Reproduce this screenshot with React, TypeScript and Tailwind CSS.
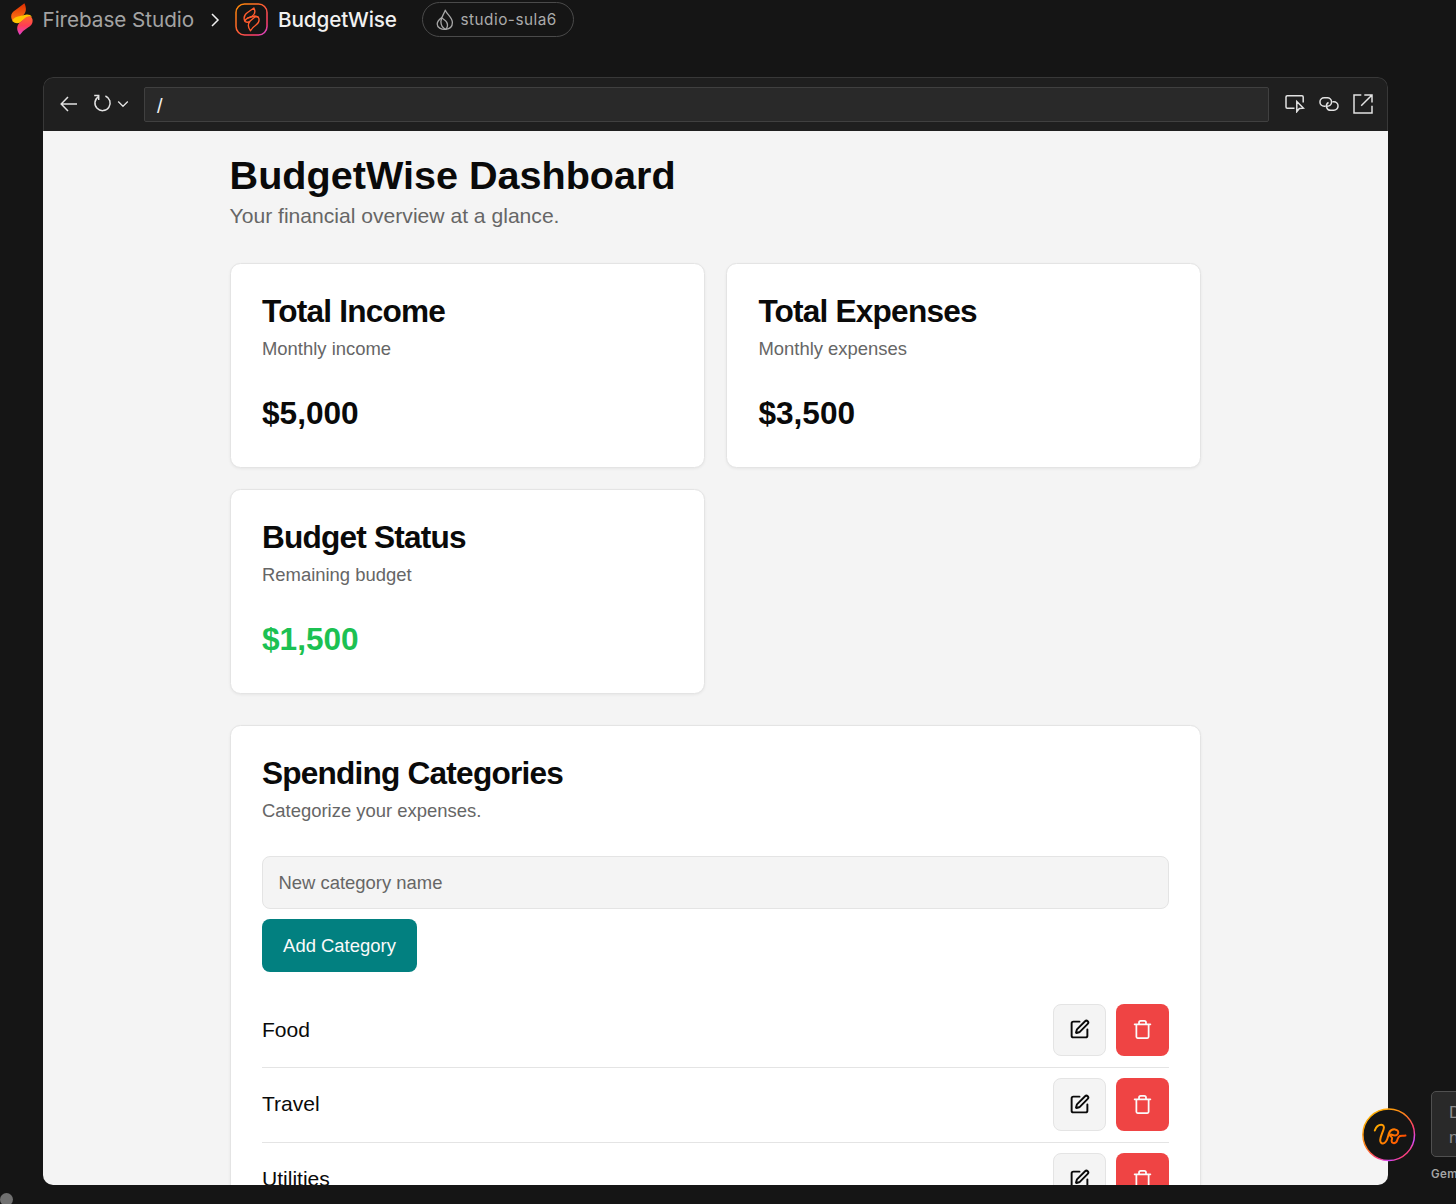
import React from "react";

const CARD =
  "rounded-[10.5px] border border-[#e4e4e4] bg-white px-[31.4px] pt-[32px] pb-[31.4px] shadow-[0_1px_3px_rgba(0,0,0,0.06)]";

function StudioMark() {
  return (
    <svg width="22" height="32" viewBox="0 0 22 32" className="shrink-0">
      <defs>
        <linearGradient id="top" x1="0" y1="0" x2="0" y2="1">
          <stop offset="0" stopColor="#dd2c00" />
          <stop offset="1" stopColor="#ff7a18" />
        </linearGradient>
        <linearGradient id="low" x1="0" y1="0" x2="0" y2="1">
          <stop offset="0" stopColor="#ff6a2b" />
          <stop offset="0.5" stopColor="#ff3d55" />
          <stop offset="1" stopColor="#e040d0" />
        </linearGradient>
      </defs>
      <path d="M1.6 18C-1.3 12.5.5 9.5 4.5 7L13.4 .2C15.8 5 15.3 9.8 12 12.5L5.5 16Q2.8 17 1.6 18Z" fill="url(#top)" />
      <path d="M1.4 18.2C2 15.8 3.3 14.8 6 13.8L15.5 11.6Q19.5 11.3 21 14C17 13.4 14.8 15 12 17.6Q6 22.8 1.4 18.2Z" fill="#ffc400" />
      <path d="M8.8 31.9C5.3 27.5 5.4 22.7 8.6 19.8L14.6 14.6Q20.3 11.6 21.4 15.9C22.3 20 20.5 22.5 17 24.6Q11.3 28 8.8 31.9Z" fill="url(#low)" />
    </svg>
  );
}

function AppBadge() {
  return (
    <svg width="33" height="33" viewBox="0 0 33 33" fill="none" className="shrink-0">
      <defs>
        <linearGradient id="ring" x1="0" y1="0" x2="33" y2="33" gradientUnits="userSpaceOnUse">
          <stop offset="0" stopColor="#ff9100" />
          <stop offset="0.5" stopColor="#ff5a36" />
          <stop offset="0.8" stopColor="#ff3d70" />
          <stop offset="1" stopColor="#b94cff" />
        </linearGradient>
      </defs>
      <rect x="1" y="1" width="31" height="31" rx="8.5" stroke="url(#ring)" strokeWidth="1.5" />
      <g stroke="#ff5c2e" strokeWidth="1.35" strokeLinejoin="round" strokeLinecap="round">
        <path d="M9.9 18.4C8 14.3 9.3 11.9 12.2 9.8L18.9 5C20.6 8.4 19.9 11.2 17.3 13L12.6 15.2Q10.3 16.4 9.9 18.4Q12.8 20.2 15.2 18L19.6 14.3Q22.8 12.3 23.8 15.3C24.7 18.4 23.5 20.3 21 22Q17.2 24.6 15.5 27.8C12.8 24.4 12.9 20.7 15.2 18" />
        <path d="M12.6 15.2L19.8 13L23.2 14.2" />
      </g>
    </svg>
  );
}

function Flame() {
  return (
    <svg width="18" height="22" viewBox="0 0 18 22" fill="none" stroke="#a8a8a8" strokeWidth="1.3" strokeLinejoin="round" className="shrink-0">
      <path d="M9.3 1.2C8.3 4.8 4.9 7.6 4.9 12.6C4.9 16.6 7 19.2 9.7 20.4C13.5 20 16.4 17.5 16.4 13.5C16.4 8.5 11 5.4 9.3 1.2Z" />
      <path d="M5.7 8.6C3.4 10.2 1.2 12 1.2 15C1.2 18.4 5 20.7 9.7 20.4C11.5 18.4 11.9 15.6 10.8 13.4C9.7 11.2 7.3 10.2 5.7 8.6Z" />
    </svg>
  );
}

const line = {
  fill: "none",
  stroke: "#e2e2e2",
  strokeWidth: 1.5,
  className: "shrink-0",
};

function StatCard({ title, note, amount, green }: { title: string; note: string; amount: string; green?: boolean }) {
  return (
    <div className={CARD + " h-[205px]"}>
      <h2 className="text-[31.6px] leading-[31px] font-bold tracking-[-0.025em]">{title}</h2>
      <p className="mt-[9.5px] text-[18.44px] leading-[26.3px] text-[#666]">{note}</p>
      <p className={"mt-[29.9px] text-[31.6px] leading-[42px] font-bold " + (green ? "text-[#1cc152]" : "")}>{amount}</p>
    </div>
  );
}

function EditIcon() {
  return (
    <svg width="21" height="21" viewBox="0 0 24 24" fill="none" stroke="#0a0a0a" strokeWidth="2.2" strokeLinecap="round" strokeLinejoin="round">
      <path d="M12 3H5a2 2 0 0 0-2 2v14a2 2 0 0 0 2 2h14a2 2 0 0 0 2-2v-7" />
      <path d="M18.375 2.625a1 1 0 0 1 3 3l-9.013 9.014a2 2 0 0 1-.853.505l-2.873.84a.5.5 0 0 1-.62-.62l.84-2.873a2 2 0 0 1 .506-.852z" />
    </svg>
  );
}

function TrashIcon() {
  return (
    <svg width="21" height="21" viewBox="0 0 24 24" fill="none" stroke="#fafafa" strokeWidth="2" strokeLinecap="round" strokeLinejoin="round">
      <path d="M3 6h18M19 6v14.4c0 .8-.7 1.4-1.4 1.4H6.4c-.7 0-1.4-.6-1.4-1.4V6M8 6V4c0-1 1-2 2-2h4c1 0 2 1 2 2v2" />
    </svg>
  );
}

function CategoryRow({ name }: { name: string }) {
  return (
    <div className="mb-[10.5px] flex h-[64.2px] items-start justify-between border-b border-[#e4e4e4]">
      <span className="text-[21.07px] leading-[52.4px]">{name}</span>
      <div className="flex gap-[10.5px]">
        <button className="flex size-[52.7px] items-center justify-center rounded-[8px] border border-[#e4e4e4] bg-[#f4f4f4]">
          <EditIcon />
        </button>
        <button className="flex size-[52.7px] items-center justify-center rounded-[8px] bg-[#ef4444]">
          <TrashIcon />
        </button>
      </div>
    </div>
  );
}

export default function App() {
  return (
    <div className="relative h-[1204px] w-[1456px] overflow-hidden bg-[#151515] font-['Liberation_Sans',sans-serif] text-[#0a0a0a]">
      <header className="flex h-[39px] items-center pl-[11px] font-['Inter',sans-serif]">
        <div className="-mt-[2px]"><StudioMark /></div>
        <span className="ml-[9.5px] w-[151.5px] text-[20.7px] tracking-[-0.05px] whitespace-nowrap text-[#a3a3a3]">Firebase Studio</span>
        <svg width="10" height="14" viewBox="0 0 10 14" {...line} stroke="#f0f0f0" className="ml-[16px] shrink-0">
          <path d="M2 1L8 7L2 13" />
        </svg>
        <div className="ml-[15px]"><AppBadge /></div>
        <span className="ml-[10px] w-[119px] text-[20.7px] font-medium tracking-[-0.1px] whitespace-nowrap text-[#f1f1f1]">BudgetWise</span>
        <div className="ml-[25px] flex h-[35px] w-[152px] items-center rounded-full border border-[#4a4a4a] pl-[13px]">
          <Flame />
          <span className="ml-[6.5px] pt-px text-[15.3px] tracking-[0.5px] whitespace-nowrap text-[#ababab]">studio-sula6</span>
        </div>
      </header>

      <main className="mt-[38px] ml-[43px] h-[1108px] w-[1345px] overflow-hidden rounded-[10px]">
        <div className="flex h-[54px] items-center rounded-t-[10px] border border-b-0 border-[#383838] bg-[#1f1f1f] pb-[2px] pl-[16px] text-white">
          <svg width="18" height="16" viewBox="0 0 18 16" {...line}>
            <path d="M17 8H1.5M8 1L1.2 8L8 15" />
          </svg>
          <svg width="19" height="19" viewBox="0 0 19 19" {...line} className="ml-[15px] shrink-0">
            <path d="M1.2 1.5H5.7V6M5.5 2.6A7.6 7.6 0 1 0 12.4 2" />
          </svg>
          <svg width="12" height="8" viewBox="0 0 12 8" {...line} strokeWidth="1.3" className="ml-[4.5px] shrink-0">
            <path d="M1.2 1.5L6 6.3L10.8 1.5" />
          </svg>
          <div className="mt-[1px] ml-[15.5px] flex h-[35px] w-[1125px] items-center rounded-[2px] border border-[#404040] bg-[#292929] pt-[3px] pl-[12px] text-[20px] leading-none text-[#f0f0f0]">/</div>
          <svg width="20" height="19" viewBox="0 0 20 19" {...line} className="ml-[15.5px] shrink-0">
            <path d="M9.5 14.2H2.2Q1 14.2 1 13V3Q1 1.8 2.2 1.8H17Q18.2 1.8 18.2 3V8.5M11.8 7.5L18.5 14.2L14.3 14.5L11.8 17.6Z" />
          </svg>
          <svg width="20" height="16" viewBox="0 0 20 16" {...line} className="ml-[14px] shrink-0">
            <path d="M6.5 10.2H5.2A4.25 4.25 0 0 1 5.2 1.7H8.3A4.25 4.25 0 0 1 8.3 10.2M13.5 5.8H14.8A4.25 4.25 0 0 1 14.8 14.3H11.7A4.25 4.25 0 0 1 9.5 6.4" />
          </svg>
          <svg width="20" height="20" viewBox="0 0 20 20" {...line} className="ml-[14px] shrink-0">
            <path d="M8.3 1H1V19H19V11.8M11.3 1H19V8.5M19 1L8.2 11.8" />
          </svg>
        </div>

        <div className="h-[1054px] overflow-hidden bg-[#f4f4f4] px-[186.6px] pt-[21.4px]">
          <h1 className="text-[39.6px] leading-[47.4px] font-bold">BudgetWise Dashboard</h1>
          <p className="text-[21.1px] leading-[31.6px] text-[#666]">Your financial overview at a glance.</p>
          <div className="mt-[31.4px] grid grid-cols-2 gap-[21px]">
            <StatCard title="Total Income" note="Monthly income" amount="$5,000" />
            <StatCard title="Total Expenses" note="Monthly expenses" amount="$3,500" />
            <StatCard title="Budget Status" note="Remaining budget" amount="$1,500" green />
          </div>
          <section className={CARD + " mt-[31.4px]"}>
            <h2 className="text-[31.6px] leading-[31px] font-bold tracking-[-0.025em]">Spending Categories</h2>
            <p className="mt-[9px] text-[18.44px] leading-[26.3px] text-[#666]">Categorize your expenses.</p>
            <div className="mt-[31.6px] flex h-[52.7px] items-center rounded-[8px] border border-[#e4e4e4] bg-[#f4f4f4] pl-[15.5px] text-[18.44px] text-[#666]">
              New category name
            </div>
            <button className="mt-[10.5px] mb-[31.7px] flex h-[52.7px] w-[155px] items-center justify-center rounded-[8px] bg-[#028080] text-[18.44px] whitespace-nowrap text-[#fafafa]">
              Add Category
            </button>
            <CategoryRow name="Food" />
            <CategoryRow name="Travel" />
            <CategoryRow name="Utilities" />
          </section>
        </div>
      </main>

      {/* Floating assistant button and the clipped chat panel */}
      <svg width="54" height="54" viewBox="0 0 54 54" fill="none" className="absolute top-[1108px] left-[1362px]">
        <defs>
          <linearGradient id="orb" x1="8" y1="6" x2="42" y2="48" gradientUnits="userSpaceOnUse">
            <stop offset="0" stopColor="#ffb300" />
            <stop offset="0.45" stopColor="#ff7a20" />
            <stop offset="0.7" stopColor="#ff3d70" />
            <stop offset="0.9" stopColor="#d44cff" />
            <stop offset="1" stopColor="#ff3d70" />
          </linearGradient>
          <linearGradient id="squiggle" x1="12" y1="16" x2="44" y2="36" gradientUnits="userSpaceOnUse">
            <stop offset="0" stopColor="#ffb300" />
            <stop offset="0.5" stopColor="#ff7a00" />
            <stop offset="1" stopColor="#ff3d00" />
          </linearGradient>
        </defs>
        <circle cx="26.7" cy="26.7" r="25.8" fill="#151515" stroke="url(#orb)" strokeWidth="1.5" />
        <path d="M12.8 22.5C14.3 18.5 16.8 16.8 19.2 16.8C21.7 16.8 22.4 18.8 21.6 21.2C20.4 25 18.2 28.8 18.2 32C18.2 34.2 19.3 35.6 21 35.4C25.8 34.8 25.6 28 27.3 24.5C28.6 22 30.8 21.2 33 21.4C35.8 21.8 37 24 35.8 26C34.6 28 31.8 27.6 29.8 26.8M29.8 26.8C27.8 25.8 27.6 27.8 29.4 29C31.2 30.2 29.6 31 29.6 33C29.6 35.2 32.5 36 34.3 34C36.3 31.6 35 29.2 38 28C40 27.2 41.5 28 43.5 27.6" stroke="url(#squiggle)" strokeWidth="2" strokeLinecap="round" />
      </svg>
      <div className="absolute top-[1091px] left-[1431px] h-[66px] w-[120px] rounded-[5px] border border-[#505050] bg-[#292929] pt-[8px] pl-[17px] text-[17px] leading-[25px] text-[#8c8c8c]">
        Describe<br />new
      </div>
      <span className="absolute top-[1167px] left-[1431px] font-['Inter',sans-serif] text-[11.5px] leading-[15px] font-semibold tracking-[0.4px] text-[#a5a5a5]">Gemini</span>
      <div className="absolute top-[1193px] left-0 size-[13px] rounded-full bg-[#707070]" />
    </div>
  );
}
